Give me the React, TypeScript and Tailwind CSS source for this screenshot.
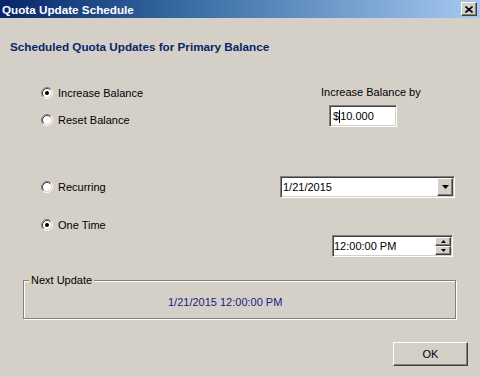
import React from 'react';

// Classic Windows 2000 style dialog

const raised =
  'bg-[#d4d0c8] border border-t-white border-l-white border-b-[#404040] border-r-[#404040] shadow-[inset_-1px_-1px_0_#808080]';
const sunken =
  'bg-white border border-t-[#808080] border-l-[#808080] border-b-white border-r-white shadow-[inset_1px_1px_0_#404040,inset_-1px_-1px_0_#d4d0c8]';

const Radio: React.FC<{ label: string; checked?: boolean; className?: string }> = ({ label, checked, className }) => (
  <div className={`flex items-center h-[18px] gap-[5px] ${className ?? ''}`}>
    <svg width="12" height="12" viewBox="0 0 12 12" className="shrink-0">
      <circle cx="6" cy="6" r="4.5" fill="#fff" />
      <path d="M2.11 9.89 A5.5 5.5 0 0 1 9.89 2.11" fill="none" stroke="#808080" strokeWidth="1" />
      <path d="M9.89 2.11 A5.5 5.5 0 0 1 2.11 9.89" fill="none" stroke="#fff" strokeWidth="1" />
      <path d="M2.82 9.18 A4.5 4.5 0 0 1 9.18 2.82" fill="none" stroke="#404040" strokeWidth="1" />
      <path d="M9.18 2.82 A4.5 4.5 0 0 1 2.82 9.18" fill="none" stroke="#d4d0c8" strokeWidth="1" />
      {checked && <circle cx="6" cy="6" r="2" fill="#000" />}
    </svg>
    <span className="leading-[13px]">{label}</span>
  </div>
);

const Arrow: React.FC<{ up?: boolean; w?: number }> = ({ up, w = 7 }) => (
  <svg width={w} height={Math.ceil(w / 2)} viewBox={`0 0 ${w} ${Math.ceil(w / 2)}`}>
    {up ? (
      <polygon points={`0,${Math.ceil(w / 2)} ${w},${Math.ceil(w / 2)} ${w / 2},0`} fill="#000" />
    ) : (
      <polygon points={`0,0 ${w},0 ${w / 2},${Math.ceil(w / 2)}`} fill="#000" />
    )}
  </svg>
);

const App: React.FC = () => {
  return (
    <div className="w-[480px] h-[377px] bg-[#d4d0c8] flex flex-col font-['Liberation_Sans',Arial,sans-serif] text-[11px] text-black overflow-hidden">
      {/* title bar */}
      <div className="h-[18px] shrink-0 flex items-center bg-linear-to-r from-[#0a246a] via-[#3a6ea5] via-40% to-[#a6caf0] pl-[2px] pr-[3px]">
        <span className="font-bold text-white text-[11.7px] leading-[13px]">Quota Update Schedule</span>
        <div className={`ml-auto w-[16px] h-[14px] flex items-center justify-center ${raised}`}>
          <svg width="8" height="7" viewBox="0 0 8 7">
            <path d="M0.5 0.5 L7.5 6.5 M7.5 0.5 L0.5 6.5" stroke="#000" strokeWidth="1.6" />
          </svg>
        </div>
      </div>

      <div className="pl-[10px] pt-[22px] font-bold text-[11.7px] text-[#0a246a] leading-[13px]">
        Scheduled Quota Updates for Primary Balance
      </div>

      {/* balance mode */}
      <div className="flex mt-[31px]">
        <div className="w-[321px] pl-[41px] flex flex-col">
          <Radio label="Increase Balance" checked />
          <Radio label="Reset Balance" className="mt-[9px]" />
        </div>
        <div className="flex flex-col">
          <span className="pt-[1px] leading-[14px]">Increase Balance by</span>
          <div className={`mt-[6px] ml-[8px] w-[68px] h-[22px] flex items-center pl-[3px] ${sunken}`}>
            <span>$</span>
            <span className="w-px h-[13px] bg-black"></span>
            <span>10.000</span>
          </div>
        </div>
      </div>

      {/* recurring */}
      <div className="flex items-center mt-[47px] h-[22px]">
        <div className="w-[280px] pl-[41px]">
          <Radio label="Recurring" />
        </div>
        <div className={`w-[175px] h-[22px] flex items-center pl-[2px] ${sunken}`}>
          <span className="flex-1">1/21/2015</span>
          <div className={`w-[16px] h-[18px] mr-[1px] flex items-center justify-center ${raised}`}>
            <Arrow />
          </div>
        </div>
      </div>

      {/* one time */}
      <div className="pl-[41px] mt-[18px]">
        <Radio label="One Time" checked />
      </div>
      <div className={`ml-[332px] mt-px w-[121px] h-[22px] flex items-center ${sunken}`}>
        <span className="flex-1 pl-px">12:00:00 PM</span>
        <div className="flex flex-col mr-[1px]">
          <div className={`w-[16px] h-[9px] flex items-center justify-center ${raised}`}>
            <Arrow up w={5} />
          </div>
          <div className={`w-[16px] h-[9px] flex items-center justify-center ${raised}`}>
            <Arrow w={5} />
          </div>
        </div>
      </div>

      {/* next update group */}
      <div className="relative mt-[23px] ml-[23px] w-[433px] h-[39px] border border-[#808080] shadow-[1px_1px_0_#fff,inset_1px_1px_0_#fff]">
        <span className="absolute -top-[7px] left-[5px] px-[2px] bg-[#d4d0c8] leading-[13px]">Next Update</span>
        <div className="pt-[15px] pl-[144px] leading-[13px] text-[#1c1c8a]">1/21/2015 12:00:00 PM</div>
      </div>

      <div className={`mt-[23px] ml-[393px] w-[75px] h-[24px] flex items-center justify-center ${raised}`}>
        OK
      </div>
    </div>
  );
};

export default App;
